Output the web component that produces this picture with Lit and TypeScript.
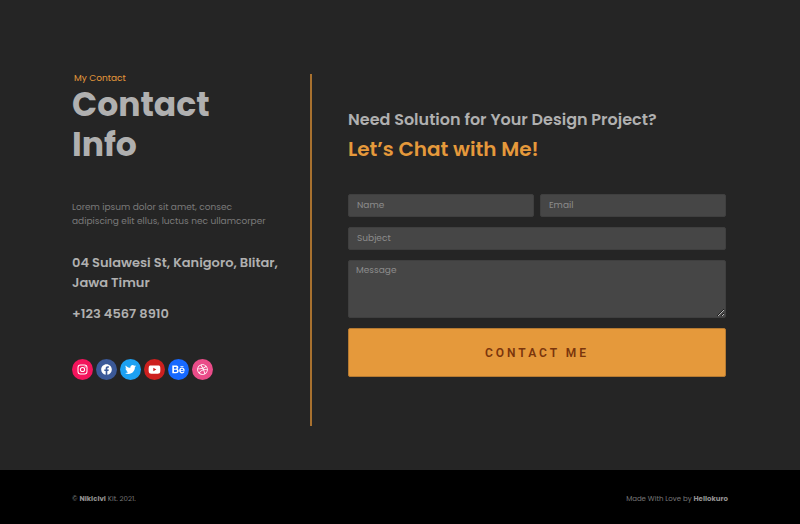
import { LitElement, html, css, svg } from "lit";
import { customElement } from "lit/decorators.js";

const socials = [
  {
    name: "Instagram",
    tone: "instagram",
    box: "0 0 24 24",
    art: svg`<g fill="none" stroke="currentColor" stroke-width="2.2"><rect x="2.2" y="2.2" width="19.6" height="19.6" rx="5.4"/><circle cx="12" cy="12" r="4.6"/></g><circle cx="17.7" cy="6.3" r="1.4"/>`,
  },
  {
    name: "Facebook",
    tone: "facebook",
    box: "0 0 512 512",
    art: svg`<path d="M504 256C504 119 393 8 256 8S8 119 8 256c0 123.78 90.69 226.38 209.25 245V327.69h-63V256h63v-54.64c0-62.15 37-96.48 93.67-96.48 27.14 0 55.52 4.84 55.52 4.84v61h-31.28c-30.8 0-40.41 19.12-40.41 38.73V256h68.78l-11 71.69h-57.78V501C413.31 482.38 504 379.78 504 256z"/>`,
  },
  {
    name: "Twitter",
    tone: "twitter",
    box: "0 0 512 512",
    art: svg`<path d="M459.37 151.716c.325 4.548.325 9.097.325 13.645 0 138.72-105.583 298.558-298.558 298.558-59.452 0-114.68-17.219-161.137-47.106 8.447.974 16.568 1.299 25.34 1.299 49.055 0 94.213-16.568 130.274-44.832-46.132-.975-84.792-31.188-98.112-72.772 6.498.974 12.995 1.624 19.818 1.624 9.421 0 18.843-1.3 27.614-3.573-48.081-9.747-84.143-51.98-84.143-102.985v-1.299c13.969 7.797 30.214 12.67 47.431 13.319-28.264-18.843-46.781-51.005-46.781-87.391 0-19.492 5.197-37.36 14.294-52.954 51.655 63.675 129.3 105.258 216.365 109.807-1.624-7.797-2.599-15.918-2.599-24.04 0-57.828 46.782-104.934 104.934-104.934 30.213 0 57.502 12.67 76.67 33.137 23.715-4.548 46.456-13.32 66.599-25.34-7.798 24.366-24.366 44.833-46.132 57.827 21.117-2.273 41.584-8.122 60.426-16.243-14.292 20.791-32.161 39.308-52.628 54.253z"/>`,
  },
  {
    name: "YouTube",
    tone: "youtube",
    box: "0 0 576 512",
    art: svg`<path d="M549.655 124.083c-6.281-23.65-24.787-42.276-48.284-48.597C458.781 64 288 64 288 64S117.22 64 74.629 75.486c-23.497 6.322-42.003 24.947-48.284 48.597-11.412 42.867-11.412 132.305-11.412 132.305s0 89.438 11.412 132.305c6.281 23.65 24.787 41.5 48.284 47.821C117.22 448 288 448 288 448s170.78 0 213.371-11.486c23.497-6.321 42.003-24.171 48.284-47.821 11.412-42.867 11.412-132.305 11.412-132.305s0-89.438-11.412-132.305zm-317.51 213.508V175.185l142.739 81.205-142.739 81.201z"/>`,
  },
  {
    name: "Behance",
    tone: "behance",
    box: "0 0 576 512",
    art: svg`<path d="M232 237.2c31.8-15.2 48.4-38.2 48.4-74 0-70.6-52.6-87.8-113.3-87.8H0v354.4h171.8c64.4 0 124.9-30.9 124.9-102.9 0-44.5-21.1-77.4-64.7-89.7zM77.9 135.9H151c28.1 0 53.4 7.9 53.4 40.5 0 30.1-19.7 42.2-47.5 42.2h-79v-82.7zm83.3 233.7H77.9V272h84.9c34.3 0 56 14.3 56 50.6 0 35.8-25.9 47-57.6 47zm358.5-240.7H376V94h143.7v34.9zM576 305.2c0-75.9-44.4-139.2-124.9-139.2-78.2 0-131.3 58.8-131.3 135.8 0 79.9 50.3 134.7 131.3 134.7 61.3 0 101-27.6 120.1-86.3H509c-6.7 21.9-34.3 33.5-55.7 33.5-41.3 0-63-24.2-63-65.3h185.1c.3-4.2.6-8.7.6-13.2zM390.4 274c2.3-33.7 24.7-54.8 58.5-54.8 35.4 0 53.2 20.8 56.2 54.8H390.4z"/>`,
  },
  {
    name: "Dribbble",
    tone: "dribbble",
    box: "0 0 512 512",
    art: svg`<path d="M256 8C119.252 8 8 119.252 8 256s111.252 248 248 248 248-111.252 248-248S392.748 8 256 8zm163.97 114.366c29.503 36.046 47.369 81.957 47.835 131.955-6.984-1.477-77.018-15.682-147.502-6.818-5.752-14.041-11.181-26.393-18.617-41.614 78.321-31.977 113.818-77.482 118.284-83.523zM396.421 97.87c-3.81 5.427-35.697 48.286-111.021 76.519-34.712-63.776-73.185-116.168-79.04-124.008 67.176-16.193 137.966 1.27 190.061 47.489zm-230.48-33.25c5.585 7.659 43.438 60.116 78.537 122.509-99.087 26.313-186.36 25.934-195.834 25.809C62.38 147.205 106.678 92.573 165.941 64.62zM44.17 256.323c0-2.166.043-4.322.108-6.473 9.268.19 111.92 1.513 217.706-30.146 6.064 11.868 11.857 23.915 17.174 35.949-76.599 21.575-146.194 83.527-180.531 142.306C64.794 360.405 44.17 310.73 44.17 256.323zm81.807 167.113c22.127-45.233 82.178-103.622 167.579-132.756 29.74 77.283 42.039 142.053 45.189 160.638-68.112 29.013-150.015 21.053-212.768-27.882zm248.38 8.489c-2.171-12.886-13.446-74.897-41.152-151.033 66.38-10.626 124.7 6.768 131.947 9.055-9.442 58.941-43.273 109.844-90.795 141.978z"/>`,
  },
];

@customElement("app-root")
export class AppRoot extends LitElement {
  static styles = css`
    :host {
      display: flex;
      flex-direction: column;
      min-height: 100vh;
      background: #252525;
      color: #b0b0b0;
      font-family: Poppins, Inter, "Open Sans", sans-serif;
    }
    * {
      box-sizing: border-box;
    }
    h1,
    h2,
    p {
      margin: 0;
    }
    .contact {
      flex: 1;
      display: grid;
      grid-template-columns: 240fr 416fr;
      padding: 74px 72px 44px;
    }
    .info {
      display: flex;
      flex-direction: column;
      border-right: 2px solid #a8712f;
    }
    .eyebrow {
      padding-left: 2px;
      font-size: 9px;
      line-height: 8px;
      color: #e5993b;
    }
    .title {
      margin-top: 3px;
      font-size: 33px;
      line-height: 40px;
      font-weight: 700;
    }
    .lead {
      margin-top: 35px;
      font-size: 9px;
      line-height: 14px;
      color: #7a7a7a;
    }
    .address {
      margin-top: 25px;
      font-size: 13px;
      line-height: 20px;
      font-weight: 600;
    }
    .phone {
      margin-top: 11px;
      font-size: 13px;
      line-height: 20px;
      font-weight: 600;
      color: inherit;
      text-decoration: none;
    }
    .socials {
      display: flex;
      gap: 3px;
      margin: 35px 0 44px;
      padding: 0;
      list-style: none;
    }
    .social {
      display: grid;
      place-items: center;
      width: 21px;
      height: 21px;
      border-radius: 50%;
      color: #fff;
    }
    .social svg {
      width: 11px;
      height: 11px;
      fill: currentColor;
    }
    .social.wide svg {
      width: 13px;
    }
    .instagram { background: #f3145c; }
    .facebook { background: #3b5998; }
    .twitter { background: #1da1f2; }
    .youtube { background: #cd201f; }
    .behance { background: #1769ff; }
    .dribbble { background: #ea4c89; }

    .chat {
      padding: 34px 2px 0 36px;
    }
    .question {
      font-size: 16px;
      line-height: 24px;
      font-weight: 600;
    }
    .invite {
      margin-top: 2px;
      font-size: 20px;
      line-height: 30px;
      font-weight: 600;
      color: #e5993b;
    }
    .form {
      display: grid;
      grid-template-columns: 1fr 1fr;
      gap: 10px 6px;
      margin-top: 30px;
    }
    .field {
      display: block;
      width: 100%;
      min-width: 0;
      height: 23px;
      margin: 0;
      padding: 0 8px;
      border: 1px solid #3f3f3f;
      border-radius: 2px;
      background: #464646;
      color: #b0b0b0;
      font: inherit;
      font-size: 9px;
      line-height: 14px;
    }
    .field::placeholder {
      color: #8c8c8c;
      opacity: 1;
    }
    .full {
      grid-column: 1 / -1;
    }
    .message {
      height: 58px;
      padding: 2px 7px;
      resize: vertical;
    }
    .submit {
      grid-column: 1 / -1;
      height: 49px;
      border: 1px solid #b57a32;
      border-radius: 2px;
      background: #e5993b;
      color: #7a350c;
      font-family: Roboto, sans-serif;
      font-size: 12px;
      font-weight: 600;
      letter-spacing: 3px;
      text-transform: uppercase;
    }
    .footer {
      display: flex;
      justify-content: space-between;
      padding: 23px 72px 20px;
      background: #000;
      color: #777;
      font-size: 7px;
      line-height: 11px;
    }
    .footer b {
      color: #929292;
    }
  `;

  render() {
    return html`
      <main class="contact">
        <section class="info">
          <p class="eyebrow">My Contact</p>
          <h1 class="title">Contact<br />Info</h1>
          <p class="lead">Lorem ipsum dolor sit amet, consec<br />adipiscing elit ellus, luctus nec ullamcorper</p>
          <p class="address">04 Sulawesi St, Kanigoro, Blitar,<br />Jawa Timur</p>
          <a class="phone" href="tel:+12345678910">+123 4567 8910</a>
          <ul class="socials">
            ${socials.map(
              (s) => html`<li>
                <a class="social ${s.tone} ${s.box === "0 0 576 512" ? "wide" : ""}" href="#" aria-label=${s.name}>
                  <svg viewBox=${s.box} aria-hidden="true">${s.art}</svg>
                </a>
              </li>`
            )}
          </ul>
        </section>
        <section class="chat">
          <p class="question">Need Solution for Your Design Project?</p>
          <h2 class="invite">Let’s Chat with Me!</h2>
          <form class="form" @submit=${(e: Event) => e.preventDefault()}>
            <input class="field" type="text" placeholder="Name" aria-label="Name" />
            <input class="field" type="email" placeholder="Email" aria-label="Email" />
            <input class="field full" type="text" placeholder="Subject" aria-label="Subject" />
            <textarea class="field full message" placeholder="Message" aria-label="Message"></textarea>
            <button class="submit" type="submit">Contact Me</button>
          </form>
        </section>
      </main>
      <footer class="footer">
        <span>© <b>Nikicivi</b> Kit. 2021.</span>
        <span>Made With Love by <b>Hellokuro</b></span>
      </footer>
    `;
  }
}
